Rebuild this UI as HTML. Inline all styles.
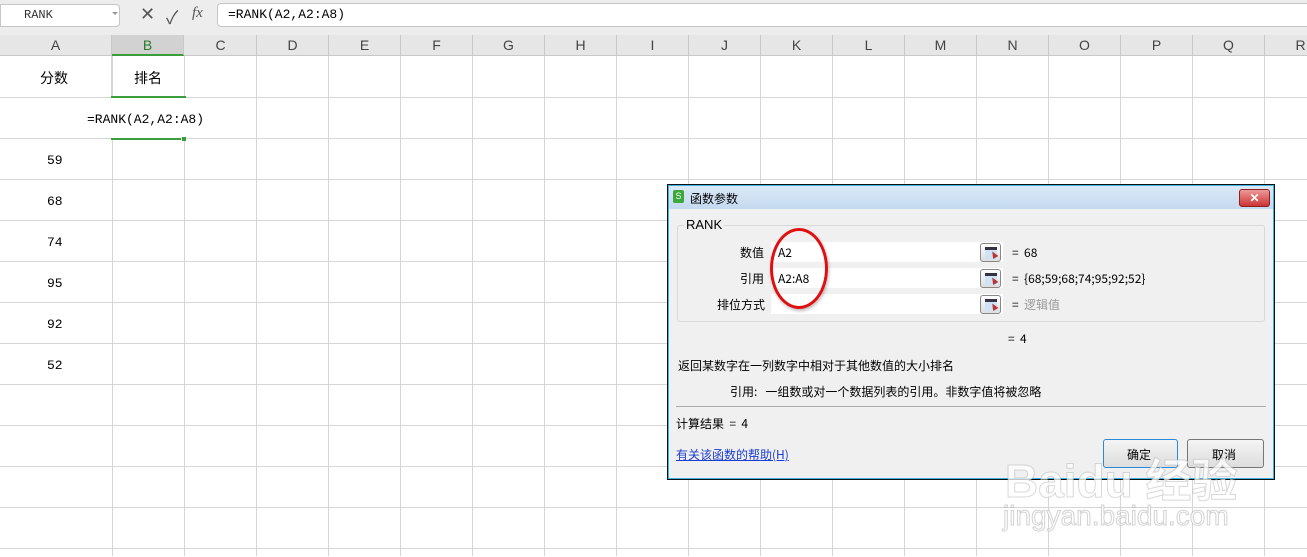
<!DOCTYPE html>
<html><head><meta charset="utf-8"><style>
*{margin:0;padding:0;box-sizing:border-box}
body{width:1307px;height:556px;overflow:hidden;background:#fff;position:relative;font-family:"Liberation Sans","Noto Sans CJK SC",sans-serif;}
.a{position:absolute}
.mono{font-family:"Liberation Mono","Noto Sans CJK SC",monospace;font-size:13px;color:#000}
.cjk{font-family:"Noto Sans CJK SC","Liberation Sans",sans-serif}
.hl{position:absolute;top:35px;height:21px;width:72px;text-align:center;font-size:14px;line-height:21px;color:#444;border-right:1px solid #c8c8c8}
.d{font-size:12px;color:#000;font-family:"Noto Sans CJK SC","Liberation Sans",sans-serif}
.inp{position:absolute;left:771px;width:232px;height:20px;background:#fff}
.btn{position:absolute;left:980px;width:21px;height:19px;border:1px solid #888;border-radius:3px;background:linear-gradient(#fff,#ddd)}
.btn i{position:absolute;left:4px;top:3px;width:12px;height:12px;background:#cfe3f7;border-top:3px solid #334}
.btn b{position:absolute;left:10px;top:7px;width:0;height:0;border-left:3px solid transparent;border-right:3px solid transparent;border-bottom:7px solid #b33;transform:rotate(-30deg)}
</style></head><body>
<div class="a" style="left:0;top:0;width:1307px;height:35px;background:#ededed"></div>
<div class="a" style="left:0;top:4px;width:120px;height:23px;background:#fff;border:1px solid #c6c6c6;border-radius:0 4px 4px 0"></div>
<div class="a mono" style="left:24px;top:8px;color:#333;font-size:12px">RANK</div>
<div class="a" style="left:112px;top:12px;border:3px solid transparent;border-top:3px solid #999"></div>
<div class="a" style="left:140px;top:4px;font-size:18px;color:#555">✕</div>
<div class="a" style="left:166px;top:4px;font-size:18px;color:#555">✓</div>
<div class="a" style="left:192px;top:5px;font-size:15px;color:#555;font-style:italic;font-family:'Liberation Serif',serif">fx</div>
<div class="a" style="left:217px;top:3px;width:1095px;height:24px;background:#fff;border:1px solid #c6c6c6;border-radius:4px"></div>
<div class="a mono" style="left:228px;top:7px">=RANK(A2,A2:A8)</div>
<div class="a" style="left:0;top:35px;width:1307px;height:21px;background:#e6e6e6;border-bottom:1px solid #c8c8c8"></div>
<div class="hl" style="left:0;width:112px">A</div>
<div class="hl" style="left:112px;background:#d2d2d2;border-bottom:2px solid #3a9e3a;color:#2a7a2a">B</div>
<div class="hl" style="left:185px">C</div><div class="hl" style="left:257px">D</div><div class="hl" style="left:329px">E</div><div class="hl" style="left:401px">F</div><div class="hl" style="left:473px">G</div><div class="hl" style="left:545px">H</div><div class="hl" style="left:617px">I</div><div class="hl" style="left:689px">J</div><div class="hl" style="left:761px">K</div><div class="hl" style="left:833px">L</div><div class="hl" style="left:905px">M</div><div class="hl" style="left:977px">N</div><div class="hl" style="left:1049px">O</div><div class="hl" style="left:1121px">P</div><div class="hl" style="left:1193px">Q</div><div class="hl" style="left:1265px">R</div>
<div class="a" style="left:0;top:57px;width:1307px;height:500px;background:repeating-linear-gradient(to bottom,transparent 0 40px,#d6d6d6 40px 41px)"></div>
<div class="a" style="left:41px;top:56px;width:1266px;height:500px;background:repeating-linear-gradient(to right,transparent 0 71px,#d6d6d6 71px 72px)"></div>
<div class="a" style="left:0;top:98px;width:185px;height:40px;background:#fff"></div>
<div class="a" style="left:111px;top:56px;width:1px;height:41px;background:#d6d6d6"></div>
<div class="a" style="left:111px;top:96px;width:75px;height:2px;background:#3a9e3a"></div>
<div class="a" style="left:111px;top:138px;width:70px;height:2px;background:#3a9e3a"></div>
<div class="a" style="left:182px;top:137px;width:4px;height:4px;background:#3a9e3a"></div>
<div class="a cjk" style="left:40px;top:68px;font-size:14px">分数</div>
<div class="a cjk" style="left:134px;top:68px;font-size:14px">排名</div>
<div class="a mono" style="left:87px;top:112px">=RANK(A2,A2:A8)</div>
<div class="a mono" style="left:47px;top:153px">59</div>
<div class="a mono" style="left:47px;top:194px">68</div>
<div class="a mono" style="left:47px;top:235px">74</div>
<div class="a mono" style="left:47px;top:276px">95</div>
<div class="a mono" style="left:47px;top:317px">92</div>
<div class="a mono" style="left:47px;top:358px">52</div>
<div class="a" style="left:667px;top:184px;width:608px;height:296px;background:#f0f0f0;border:1px solid #111;box-shadow:inset 0 0 0 1px #3cb4e6"></div>
<div class="a" style="left:669px;top:186px;width:604px;height:23px;background:linear-gradient(#dce9f7,#c5d9ef)"></div>
<div class="a" style="left:673px;top:190px;width:11px;height:13px;background:#3aa83a;color:#fff;font-size:9px;text-align:center;line-height:13px;border-radius:2px">S</div>
<div class="a d" style="left:690px;top:190px">函数参数</div>
<div class="a" style="left:1239px;top:189px;width:31px;height:18px;background:linear-gradient(#e99,#c33);border:1px solid #822;border-radius:3px;color:#fff;font-size:12px;text-align:center;line-height:16px;font-weight:bold">✕</div>
<div class="a" style="left:677px;top:225px;width:588px;height:97px;border:1px solid #d8d8d8;border-radius:3px"></div>
<div class="a d" style="left:684px;top:217px;background:#f0f0f0;padding:0 2px;font-family:'Liberation Sans',sans-serif;font-size:13px">RANK</div>
<div class="inp" style="top:242px"></div><div class="inp" style="top:268px"></div><div class="inp" style="top:294px"></div>
<div class="btn" style="top:243px"><i></i><b></b></div><div class="btn" style="top:269px"><i></i><b></b></div><div class="btn" style="top:295px"><i></i><b></b></div>
<div class="a d" style="left:740px;top:244px">数值</div>
<div class="a d" style="left:740px;top:270px">引用</div>
<div class="a d" style="left:717px;top:296px">排位方式</div>
<div class="a d" style="left:778px;top:244px">A2</div>
<div class="a d" style="left:778px;top:270px">A2:A8</div>
<div class="a" style="left:770px;top:228px;width:58px;height:81px;border:3px solid #e01010;border-radius:50%;box-shadow:1px 2px 3px rgba(0,0,0,0.25)"></div>
<div class="a d" style="left:1012px;top:244px">=&nbsp; 68</div>
<div class="a d" style="left:1012px;top:270px">=&nbsp; {68;59;68;74;95;92;52}</div>
<div class="a d" style="left:1012px;top:296px;color:#999"><span style="color:#000">=</span>&nbsp; 逻辑值</div>
<div class="a d" style="left:1008px;top:330px">=&nbsp; 4</div>
<div class="a d" style="left:678px;top:357px">返回某数字在一列数字中相对于其他数值的大小排名</div>
<div class="a d" style="left:730px;top:383px">引用:&nbsp;&nbsp; 一组数或对一个数据列表的引用。非数字值将被忽略</div>
<div class="a" style="left:676px;top:406px;width:590px;height:1px;background:#aaa"></div>
<div class="a d" style="left:676px;top:415px">计算结果 &nbsp;= &nbsp;4</div>
<div class="a d" style="left:676px;top:446px;color:#1a3cd0;text-decoration:underline">有关该函数的帮助(H)</div>
<div class="a" style="left:1103px;top:439px;width:75px;height:29px;border:1px solid #2a8ad8;border-radius:3px;background:linear-gradient(#f4f4f4,#ddd)"></div>
<div class="a d" style="left:1127px;top:446px">确定</div>
<div class="a" style="left:1187px;top:439px;width:77px;height:29px;border:1px solid #777;border-radius:3px;background:linear-gradient(#f4f4f4,#ddd)"></div>
<div class="a d" style="left:1212px;top:446px">取消</div>
<div class="a" style="left:1005px;top:445px;font-size:46px;font-weight:bold;color:rgba(255,255,255,0.75);-webkit-text-stroke:1px rgba(180,180,180,0.5)">Baidu 经验</div>
<div class="a" style="left:1003px;top:500px;font-size:28px;color:rgba(255,255,255,0.8);-webkit-text-stroke:1px rgba(180,180,180,0.6)">jingyan.baidu.com</div>
</body></html>
